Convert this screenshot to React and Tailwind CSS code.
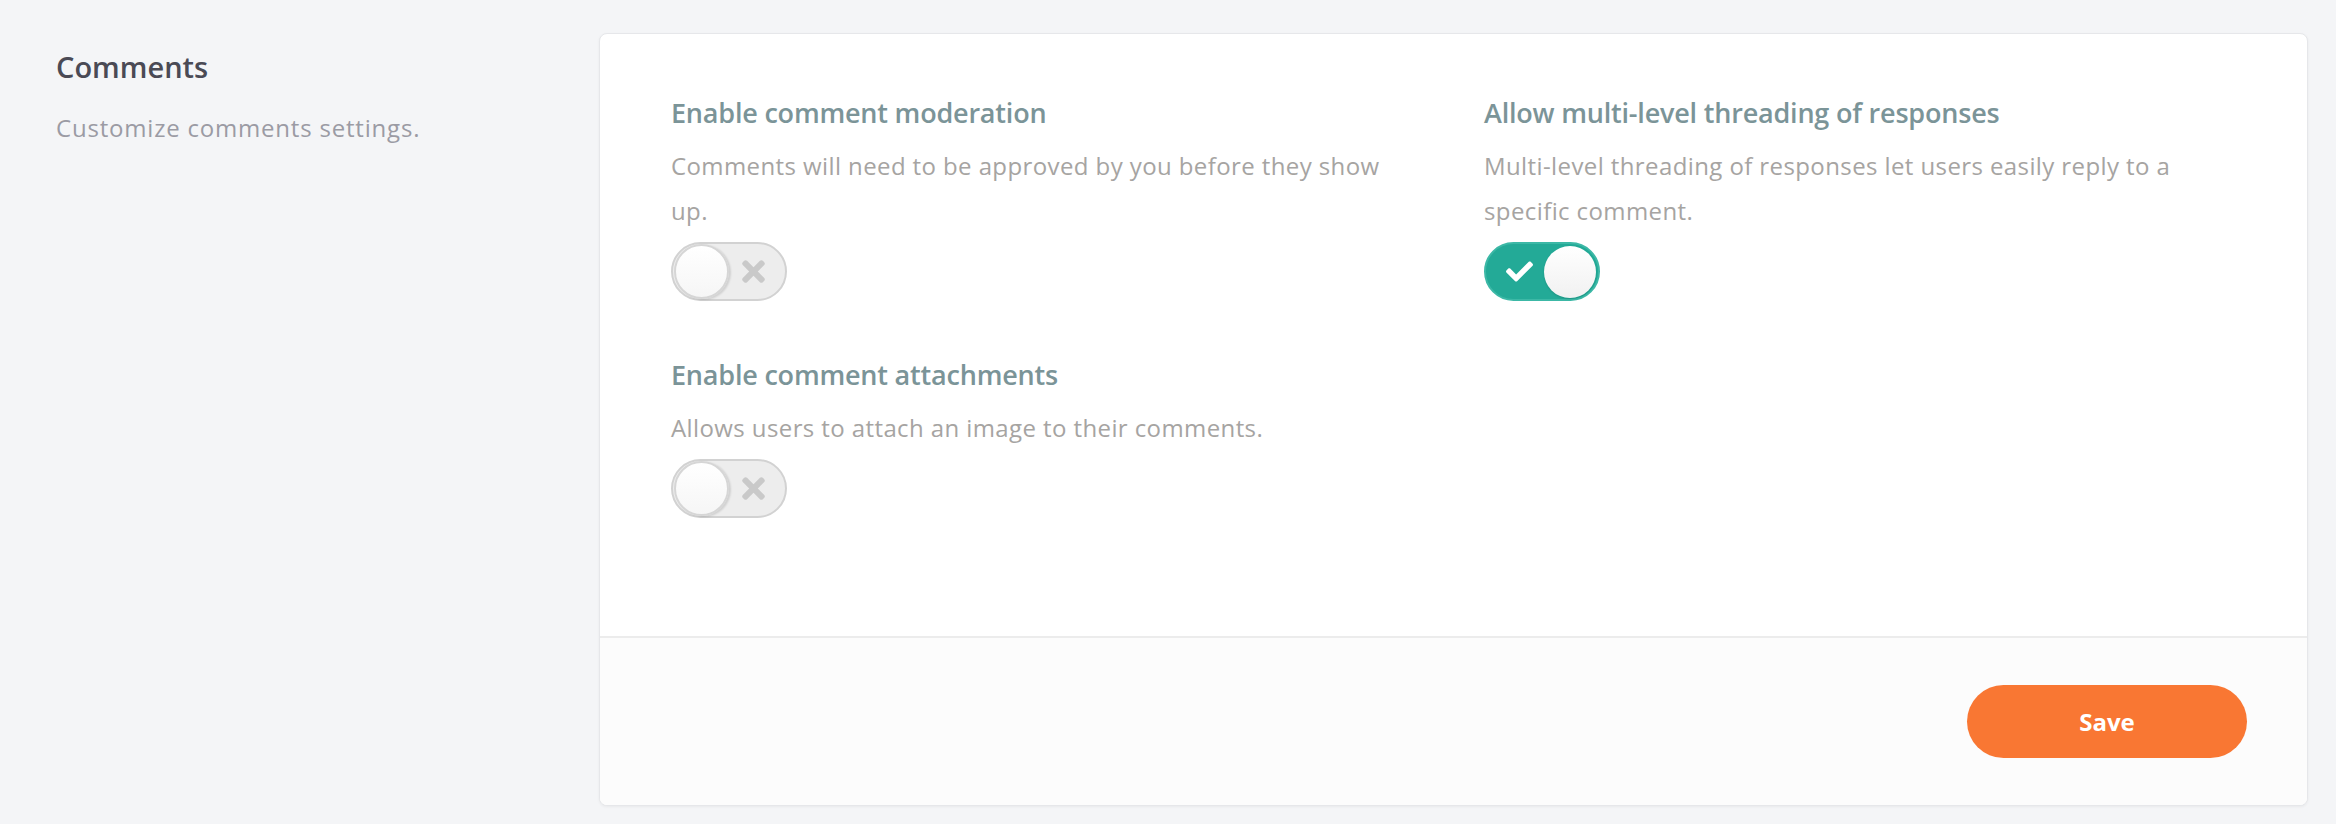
import React from "react";
import { FaCheck, FaTimes } from "react-icons/fa";

function Toggle({ on }) {
  if (on) {
    return (
      <div className="mt-[9px] w-[116px] h-[59px] rounded-full bg-[#23aa97] border-2 border-[#3cb8a6] flex items-center justify-between pl-[20px] pr-[2px]">
        <FaCheck className="text-white w-[27px] h-[27px]" />
        <div className="w-[52px] h-[52px] rounded-full bg-gradient-to-b from-white to-[#f1f1f1] shadow-[0_1px_2px_rgba(0,0,0,0.15)]" />
      </div>
    );
  }
  return (
    <div className="mt-[9px] w-[116px] h-[59px] rounded-full bg-[#ededed] border-2 border-[#d2d2d2] flex items-center pl-[1px]">
      <div className="w-[55px] h-[55px] rounded-full bg-gradient-to-b from-white to-[#f6f6f6] border-2 border-[#d6d6d6] shadow-[2px_1px_2px_rgba(0,0,0,0.12)]" />
      <FaTimes className="ml-[13px] text-[#c9c9c9] w-[23px] h-[33px]" />
    </div>
  );
}

function Setting({ title, desc, on }) {
  return (
    <div className="flex flex-col">
      <h3 className="text-[27px] leading-[40px] font-semibold tracking-[-0.2px] text-[#7b9498]">{title}</h3>
      <p className="mt-[10px] text-[24px] leading-[45px] tracking-[0.4px] text-[#a6a4a2]">{desc}</p>
      <Toggle on={on} />
    </div>
  );
}

export default function App() {
  return (
    <div className="min-h-screen bg-[#f4f5f7] font-['Open_Sans',sans-serif] flex pl-[56px] pr-[28px] pt-[33px] pb-[18px]">
      <div className="w-[543px] shrink-0 pt-[14px]">
        <h2 className="text-[29px] leading-[40px] font-semibold text-[#4a4a55]">Comments</h2>
        <p className="mt-[23px] text-[24px] leading-[36px] tracking-[0.8px] text-[#9b9ba4]">Customize comments settings.</p>
      </div>
      <div className="flex-1 bg-white border border-[#e6e7ea] rounded-[8px] shadow-[0_1px_3px_rgba(0,0,0,0.05)] flex flex-col overflow-hidden">
        <div className="pt-[59px] px-[71px] pb-[118px] grid grid-cols-2 gap-x-[61px] gap-y-[54px]">
          <Setting
            title="Enable comment moderation"
            desc="Comments will need to be approved by you before they show up."
            on={false}
          />
          <Setting
            title="Allow multi-level threading of responses"
            desc="Multi-level threading of responses let users easily reply to a specific comment."
            on={true}
          />
          <Setting
            title="Enable comment attachments"
            desc="Allows users to attach an image to their comments."
            on={false}
          />
        </div>
        <div className="border-t-2 border-[#ececec] bg-[#fcfcfc] flex-1 flex items-center justify-end pr-[60px]">
          <button className="w-[280px] h-[73px] rounded-full bg-[#f97733] text-white text-[24px] font-bold">
            Save
          </button>
        </div>
      </div>
    </div>
  );
}
